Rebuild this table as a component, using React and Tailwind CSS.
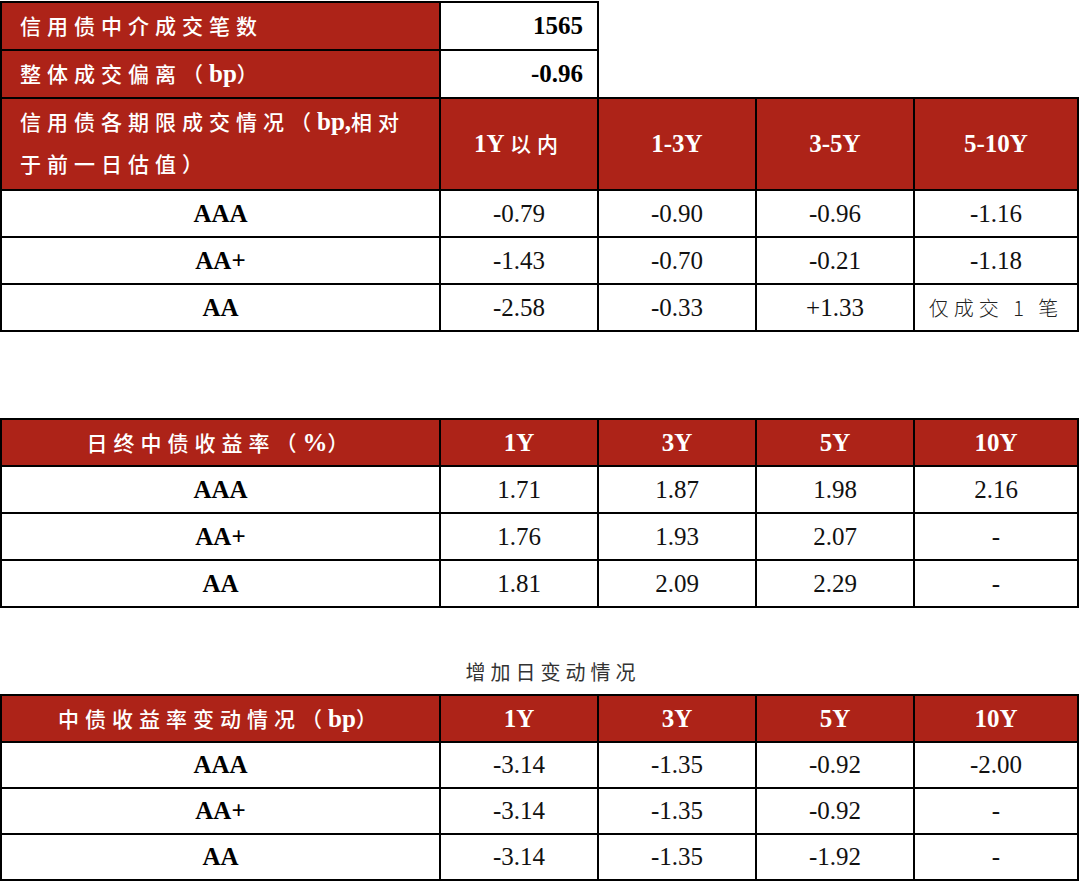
import React from 'react';

const FONT = "font-['Liberation_Serif','Noto_Sans_CJK_SC',serif]";
const CJK_RE = /([\u2E80-\uFFEF]+)/;

// split a string into CJK / latin runs so each gets its own weight and spacing
function Mixed({ text, cjk = 'font-medium tracking-[6px] text-[21px]', latin = 'font-bold text-[25px]' }) {
  const parts = text.split(CJK_RE).filter(Boolean);
  return (
    <span className="whitespace-pre">
      {parts.map((p, i) =>
        CJK_RE.test(p) ? (
          <span key={i} className={`${cjk} font-['Noto_Sans_CJK_SC',sans-serif]`}>
            {p}
          </span>
        ) : (
          <span key={i} className={latin}>
            {p}
          </span>
        )
      )}
    </span>
  );
}

function Head({ text, className = '' }) {
  return (
    <div className={`bg-[#ad2318] text-white flex items-center justify-center ${className}`}>
      <Mixed text={text} />
    </div>
  );
}

function Label({ text }) {
  return (
    <div className="bg-white flex items-center justify-center text-[25px] font-bold text-black">
      {text}
    </div>
  );
}

function Data({ text }) {
  const isCjk = CJK_RE.test(text);
  return (
    <div className="bg-white flex items-center justify-center text-[25px] text-[#111]">
      {isCjk ? (
        <span className="font-['Noto_Sans_CJK_SC',sans-serif] text-[20px] tracking-[5px] text-[#222] font-light">
          {text}
        </span>
      ) : (
        text
      )}
    </div>
  );
}

const t1 = [
  ['AAA', '-0.79', '-0.90', '-0.96', '-1.16'],
  ['AA+', '-1.43', '-0.70', '-0.21', '-1.18'],
  ['AA', '-2.58', '-0.33', '+1.33', '仅成交 1 笔'],
];

const t2 = [
  ['AAA', '1.71', '1.87', '1.98', '2.16'],
  ['AA+', '1.76', '1.93', '2.07', '-'],
  ['AA', '1.81', '2.09', '2.29', '-'],
];

const t3 = [
  ['AAA', '-3.14', '-1.35', '-0.92', '-2.00'],
  ['AA+', '-3.14', '-1.35', '-0.92', '-'],
  ['AA', '-3.14', '-1.35', '-1.92', '-'],
];

function Table({ title, cols, rows, rowClass }) {
  return (
    <div className={`grid grid-cols-[437px_156px_156px_156px_162px] ${rowClass} gap-[2px] p-[2px] bg-black w-[1079px]`}>
      <Head text={title} />
      {cols.map((c) => (
        <Head key={c} text={c} />
      ))}
      {rows.flat().map((v, i) => (i % 5 === 0 ? <Label key={i} text={v} /> : <Data key={i} text={v} />))}
    </div>
  );
}

export default function App() {
  return (
    <div className={`w-[1080px] h-[881px] overflow-hidden bg-white pt-[1px] ${FONT}`}>
      {/* summary rows */}
      <div className="grid grid-cols-[437px_156px] grid-rows-[46px_46px] gap-[2px] p-[2px] pb-0 bg-black w-[599px]">
        <div className="bg-[#ad2318] text-white flex items-center pl-[18px]">
          <Mixed text="信用债中介成交笔数" />
        </div>
        <div className="bg-white flex items-center justify-end pr-[14px] text-[25px] font-bold">1565</div>
        <div className="bg-[#ad2318] text-white flex items-center pl-[18px]">
          <Mixed text="整体成交偏离（bp）" />
        </div>
        <div className="bg-white flex items-center justify-end pr-[14px] text-[25px] font-bold">-0.96</div>
      </div>

      {/* table 1 */}
      <div className="grid grid-cols-[437px_156px_156px_156px_162px] grid-rows-[90px_45px_45px_45px] gap-[2px] p-[2px] bg-black w-[1079px]">
        <div className="bg-[#ad2318] text-white flex flex-col justify-center pl-[18px] leading-[38px]">
          <div>
            <Mixed text="信用债各期限成交情况（bp,相对" />
          </div>
          <div>
            <Mixed text="于前一日估值）" />
          </div>
        </div>
        {['1Y 以内', '1-3Y', '3-5Y', '5-10Y'].map((c) => (
          <Head key={c} text={c} />
        ))}
        {t1.flat().map((v, i) => (i % 5 === 0 ? <Label key={i} text={v} /> : <Data key={i} text={v} />))}
      </div>

      <div className="mt-[86px]">
        <Table
          title="日终中债收益率（%）"
          cols={['1Y', '3Y', '5Y', '10Y']}
          rows={t2}
          rowClass="grid-rows-[45px_45px_45px_45px]"
        />
      </div>

      <div className="h-[86px] flex items-end justify-center pb-[8px] pl-[26px]">
        <span className="font-['Noto_Sans_CJK_SC',sans-serif] text-[20px] leading-[28px] tracking-[5px] text-[#333]">
          增加日变动情况
        </span>
      </div>

      <Table
        title="中债收益率变动情况（bp）"
        cols={['1Y', '3Y', '5Y', '10Y']}
        rows={t3}
        rowClass="grid-rows-[45px_44px_44px_44px]"
      />
    </div>
  );
}
